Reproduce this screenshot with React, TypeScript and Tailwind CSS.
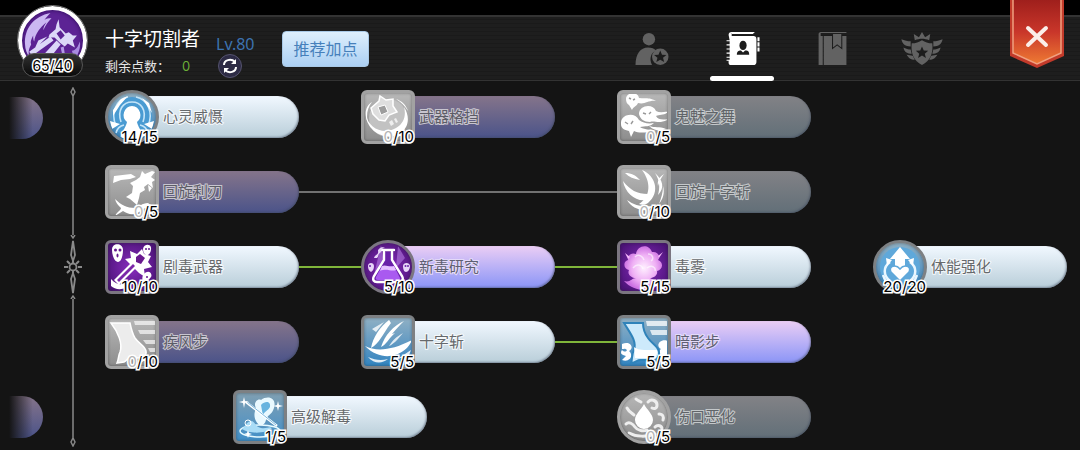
import React, { useState } from "react";
import clsx from "clsx";

type Tone = "light" | "violet" | "dimViolet" | "dimGray";
type Tint = "blue" | "sky" | "purple" | "gray";

type Skill = {
  name: string;
  points: number;
  max: number;
  tone: Tone;
  tint: Tint;
  round?: boolean;
  cell: string;
  link?: "on" | "off";
  art: React.ReactNode;
};

const barTone: Record<Tone, string> = {
  light: "bg-linear-to-b from-[#f1f8ff] to-[#b9ced9] text-[#66696c]",
  violet: "bg-linear-to-b from-[#ebcdf4] to-[#8b94f6] text-[#5f6072]",
  dimViolet: "bg-linear-to-b from-[#85748a] to-[#4b5389] text-[#5c5c66]",
  dimGray: "bg-linear-to-b from-[#828286] to-[#626f78] text-[#606468]",
};

const nameStroke: Record<Tone, string> = {
  light: "[-webkit-text-stroke:2px_#f4f8fb]",
  violet: "[-webkit-text-stroke:2px_#e4daf8]",
  dimViolet: "[-webkit-text-stroke:2px_#c8c5cf]",
  dimGray: "[-webkit-text-stroke:2px_#c4c8ca]",
};

const iconTint: Record<Tint, string> = {
  blue: "border-[#7d8083] bg-linear-to-b from-[#8fb0c4] to-[#2f84c0]",
  sky: "border-[#7d8083] bg-linear-to-b from-[#7f9fb2] to-[#3f8fc8]",
  purple: "border-[#7b7681] bg-radial from-[#8a2cc0] to-[#43106d]",
  gray: "border-[#a2a2a2] bg-linear-to-b from-[#b8b8b8] to-[#8d8d8d]",
};

function Art({ round, children }: { round?: boolean; children: React.ReactNode }) {
  return (
    <svg
      viewBox="0 0 54 54"
      className={clsx(
        "absolute -inset-[3px] size-[54px]",
        round ? "[clip-path:circle(23px)]" : "[clip-path:inset(4px_round_3px)]"
      )}
      fill="#fff"
      aria-hidden="true"
    >
      {children}
    </svg>
  );
}

const mindArt = (
  <>
    <circle cx="27" cy="27" r="20" fill="#4a9bd2" />
    <path d="M27 16a9 9 0 0 1 5 16c1 5 4 7 6 16H16c2-9 5-11 6-16a9 9 0 0 1 5-16z" />
    <g fill="none" stroke="#c4e4f8" strokeWidth="1.600">
      <path d="M16 32C12 20 18 12 27 12s15 8 11 20" />
      <path d="M11 36C5 22 12 9 23 7M43 36c6-14-1-27-12-29" />
      <path d="M19 35c-5 1-7 4-8 8M35 35c5 1 7 4 8 8" />
    </g>
    <path d="M5 31l10 3-8 5zM49 31l-10 3 8 5zM8 20l8-11 7-3-8 9-7 11zM37 8l7 5 3 10-6-9z" />
  </>
);

const guardArt = (
  <>
    <circle cx="27" cy="28" r="19" fill="#c2c2c2" />
    <path d="M10 18l8-7 1-5 6 4 7-1v7l4 6-8 3-4 6-6-1-6-6z" fill="#dedede" stroke="#fff" strokeWidth="1.500" />
    <path d="M17 17l7-2 3 7-7 3z" fill="#9d9d9d" stroke="#fff" />
    <path d="M5 24c2 15 18 21 30 14 9-5 10-14 8-21 7 11 4 22-5 27C25 51 5 42 5 24z" />
    <path d="M11 12c-5 6-6 14-4 21-4-8-3-17 4-21zM35 9c6 2 10 6 12 12-3-5-7-9-12-12z" />
    <path d="M28 32l3-2 2 4-3 2zM33 29l2-1 2 4-2 1z" fill="#eee" />
  </>
);

const ghostsArt = (
  <>
    <path d="M9 9c0-7 12-8 13-1 6 1 10-1 17 3-8-1-11 4-18 2-1 3-5 4-6 7l-3-5c-2-1-3-3-3-6z" />
    <path d="M22 24c0-9 14-11 17-3 4 2 8 1 13 0-5 5-9 3-13 5 2 4 7 4 13 3-10 6-14 1-19 3-6 0-10-3-11-8z" />
    <path d="M4 34c-1-10 14-13 18-4 4 3 9 4 15 3-4 4-9 3-14 4 4 3 10 2 16 4-9 1-16 3-22 0l-3 6-2-6c-5-1-8-3-8-7z" />
    <path d="M32 36c6 2 10 0 17 3-5 2-10 3-17-3z" />
    <g stroke="#999" strokeWidth="1.400">
      <path d="M12 8l2 1M16 10l2-1M26 23l3 1M32 24l2-2M8 32l3 2M14 34l2-3" />
    </g>
  </>
);

const bladeArt = (
  <>
    <path d="M9 11l17-2 5 3-6 2-9 1-8 3z" />
    <path d="M37 6l3 3 7-3 3 1-4 5 4 3-3 2 1 6-5-4-4 3 1 3-5 3-1 5-2 7-7-6-4-2 6-4 1-7-3-3 6-3 4-3z" />
    <path d="M10 34c6 6 12 9 20 9 4-1 7-5 13-5l4 3-9 3c-7 7-14 6-20 2L10 51c2-4 6-6 6-8-3-3-5-5-6-9z" />
    <path d="M43 20l4 3-3 4z" />
  </>
);

const spinCrossArt = (
  <>
    <path d="M25 5c13 5 19 22 6 33-3 2-6 2-9 1C34 31 34 17 25 5z" />
    <path d="M6 16c7 9 14 13 25 13l-2 6C19 37 8 28 6 16zM8 8c7 0 10 2 15 7C17 14 12 12 8 8zM10 35c8 6 16 7 26 6l-5 4c-9 1-17-3-21-10z" />
    <path d="M38 8c5 8 5 15 3 22 7-7 5-15-3-22zM47 9c-5 3-7 7-6 12 1-4 3-8 6-12zM46 21c2 7 0 13-4 18 2-6 4-11 4-18z" />
  </>
);

const poisonBladeArt = (
  <>
    <path d="M7 10c0-8 11-7 11 0 0 6-2 12-5 12S7 16 7 10zM38 9c1-6 9-5 8 0 0 4-3 7-5 6s-3-3-3-6zM39 34c4-5 9-1 7 3-2 3-5 4-8 6-1-4-1-7 1-9z" />
    <g fill="#64188e">
      <circle cx="10.500" cy="10" r="1.500" />
      <circle cx="15" cy="10" r="1.500" />
      <ellipse cx="12.500" cy="15.500" rx="1" ry="2" />
      <circle cx="41" cy="9" r="1" />
      <circle cx="44" cy="9" r="1" />
      <circle cx="42" cy="37" r="1" />
    </g>
    <path d="M9 40l16-16-5-5 6-1-1-7 7 3 5-5 2 5 7 2-3 6 4 5-8 2 1 8-6-4-4-4-16 16z" />
    <path d="M12 40l16-16 2 2-16 16z" fill="#7b26a8" />
    <path d="M31 17l4-3 5 4-4 6-5-2z" fill="#69198f" />
    <path d="M6 39c5 6 12 7 21 4-5 7-16 8-21 3z" />
  </>
);

const flaskArt = (
  <>
    <g fill="#b27be0" opacity=".6">
      <path d="M20 5l5 30H13zM37 6l7 12-9 10z" />
    </g>
    <path d="M20 10h13M23 12v8L13 36c-2 4 0 6 3 6h22c3 0 5-2 3-6L31 20v-8" fill="#6a21a8" stroke="#fff" strokeWidth="2.400" strokeLinecap="round" />
    <path d="M21 26h12l6 12c0 2-1 2-2 2H17c-2 0-3-1-2-3z" fill="#a95af0" />
    <path d="M21 26c4-2 7 2 12 0l2 4c-5 2-9-2-16 1z" fill="#e5bfff" />
    <path d="M13 18c1-4 5-3 4-7 0-2 4-5 7-3-5 0-3 4-5 5s-1 3-3 5zM7 26c0-4 6-4 6 0 0 3-1 5-3 6-2-1-3-3-3-6zM42 26c0-4 7-4 7 0 0 3-2 6-4 6s-3-3-3-6z" fill="#e8d5f8" />
    <circle cx="44.500" cy="26" r="1" fill="#6a21a8" />
    <circle cx="47" cy="26" r="1" fill="#6a21a8" />
    <circle cx="9" cy="26" r="1" fill="#6a21a8" />
  </>
);

const cloudArt = (
  <>
    <defs>
      <radialGradient id="mist">
        <stop offset="0" stopColor="#fff0ff" />
        <stop offset=".6" stopColor="#efb0f5" />
        <stop offset="1" stopColor="#cc70e2" />
      </radialGradient>
    </defs>
    <path d="M7 41c6 2 8-3 12-3-5 0-9-4-7-8-6-1-6-9-1-10-1-4 3-8 8-6 1-9 13-11 16-2 6-1 9 5 6 8 6 2 5 10-1 11 1 4-3 7-7 7 4 2 8 5 14 3-7 6-14 9-20 9s-15-3-20-9z" fill="url(#mist)" />
    <path d="M18 17c4-4 8 0 9 3M31 14c5 0 6 5 3 7M16 28c4-5 9-3 10 1M30 28c5-4 9 0 8 3" fill="none" stroke="#fff" strokeWidth="1.500" opacity=".6" />
    <path d="M8 13l5 4-2 2zM46 12l-4 6-1-2z" fill="#f4b6fa" />
  </>
);

const stepArt = (
  <>
    <g opacity=".65">
      <path d="M29 6h22v4H30zM33 15h18v4H35zM38 25h13v4H41zM43 33h8v4h-6z" />
    </g>
    <path d="M6 8h19c1 5 2 10 5 15 4 6 10 8 11 13 1 5-3 7-8 7h-8c-3 0-3 3-6 4l-7 1c2-5 1-7 3-11 3-8-2-20-9-29z" fill="#ececec" stroke="#fff" strokeWidth="1.500" />
  </>
);

const crossArt = (
  <>
    <path d="M28 5C19 12 12 22 10 33c8-4 11-13 20-25-1-1-1-2-2-3zM43 6C32 11 24 20 20 32c5-2 8-9 14-14l-3 1c4-5 8-9 12-13z" />
    <path d="M42 18c-7 4-10 7-14 13 5-2 8-6 14-13zM11 14l12-7-8 10z" opacity=".8" />
    <path d="M4 31c12 6 28 4 47-6-5 14-28 25-47 6z" />
    <path d="M7 42c7 3 13 4 20 2-6 5-14 5-20-2zM38 43l12-8-3 8z" opacity=".85" />
  </>
);

const shadowStepArt = (
  <>
    <g opacity=".75">
      <path d="M29 6h22v5H30zM33 15h18v5H35z" />
    </g>
    <path d="M5 29c8-4 13 4 7 7 5 4 1 12-7 9l4-4c-5-1-6-3-4-6 2 2 4 2 5 0-2-2-3-1-5-1zM51 26c-8-3-13 5-7 8-3 2-3 9 3 12l4 1z" />
    <path d="M7 8h19c0 6 2 11 5 15 4 6 10 8 11 14 1 6-3 8-8 8H23c-3 0-4 3-9 3 2-5 0-8 3-13 3-9-4-17-10-27z" fill="#cdeafb" stroke="#2f83ba" strokeWidth="2" />
    <path d="M17 32c5 4 14 3 23 3 1 5-2 8-6 8H18z" />
  </>
);

const woundArt = (
  <>
    <path d="M27 14c3 6 9 10 9 16a9 9 0 0 1-18 0c0-6 6-10 9-16z" />
    <g fill="none" stroke="#eee" strokeWidth="3" strokeLinecap="round">
      <path d="M10 18c2 4 5 5 7 7M19 9c2 2 4 2 5 3M31 12c4-4 9-1 9 3s-3 4-5 3" />
      <path d="M9 34c3-3 7 0 9 3s8 5 12 3M12 43c7 4 18 4 26 1M42 24c4 0 5 3 4 6M38 37c3-3 7-1 7 2" />
    </g>
  </>
);

const strengthArt = (
  <>
    <circle cx="27" cy="27" r="20" fill="#5fa8da" />
    <path d="M27 7l10 12h-5v9H22v-9h-5z" />
    <path d="M27 41l-9-9c-3-6 5-8 9-3 4-5 12-3 9 3z" stroke="#5fa8da" strokeWidth="1.500" />
    <g fill="none" stroke="#eaf7ff" strokeWidth="2.500">
      <path d="M17 22c-7 5-7 13 0 19M37 22c7 5 7 13 0 19" />
      <path d="M10 35l3 7 7 1M44 35l-3 7-7 1" />
    </g>
    <path d="M13 18l6 2-5 6zM41 18l-6 2 5 6z" />
  </>
);

const cureArt = (
  <>
    <ellipse cx="27" cy="41" rx="20" ry="6" fill="none" stroke="#e6faff" strokeWidth="1.500" />
    <path d="M9 39c3-2 5-8 9-8s4 6 10 7 8-2 11 0c-6 6-23 6-30 1z" fill="#a9dcf6" />
    <path d="M26 35c-6-6-5-12-3-17-3-4 1-10 5-8 7-5 16-2 13 8-2 7-7 7-8 12-1 4-3 6-7 5z" fill="#e9f9ff" />
    <path d="M28 15c5-5 10-3 9 2-2 4-6 4-7 9z" fill="#68b4df" />
    <path d="M13 12l31 24" stroke="#fff" strokeWidth="2.500" />
    <path d="M14 12l29 23" stroke="#5aa8d8" strokeWidth=".8" />
    <path d="M11 7l1 4 4 1-4 1-1 5-1-5-4-1 4-1zM45 11l1 4 4 1-4 1-1 4-1-4-4-1 4-1zM15 40l1 3 3 1-3 1-1 3-1-3-3-1 3-1z" />
    <circle cx="15" cy="33" r="3" fill="none" stroke="#fff" />
  </>
);

const skills: Skill[] = [
  { name: "心灵威慑", points: 14, max: 15, tone: "light", tint: "blue", round: true, cell: "row-start-1 col-start-1 col-span-2", art: mindArt },
  { name: "武器格挡", points: 0, max: 10, tone: "dimViolet", tint: "gray", cell: "row-start-1 col-start-3 col-span-2", art: guardArt },
  { name: "鬼魅之舞", points: 0, max: 5, tone: "dimGray", tint: "gray", cell: "row-start-1 col-start-5 col-span-2", art: ghostsArt },
  { name: "回旋利刃", points: 0, max: 5, tone: "dimViolet", tint: "gray", cell: "row-start-2 col-start-1 col-span-4", link: "off", art: bladeArt },
  { name: "回旋十字斩", points: 0, max: 10, tone: "dimGray", tint: "gray", cell: "row-start-2 col-start-5 col-span-2", art: spinCrossArt },
  { name: "剧毒武器", points: 10, max: 10, tone: "light", tint: "purple", cell: "row-start-3 col-start-1 col-span-2", link: "on", art: poisonBladeArt },
  { name: "新毒研究", points: 5, max: 10, tone: "violet", tint: "purple", round: true, cell: "row-start-3 col-start-3 col-span-2", link: "on", art: flaskArt },
  { name: "毒雾", points: 5, max: 15, tone: "light", tint: "purple", cell: "row-start-3 col-start-5 col-span-2", art: cloudArt },
  { name: "体能强化", points: 20, max: 20, tone: "light", tint: "blue", round: true, cell: "row-start-3 col-start-7 col-span-2", art: strengthArt },
  { name: "疾风步", points: 0, max: 10, tone: "dimViolet", tint: "gray", cell: "row-start-4 col-start-1 col-span-2", art: stepArt },
  { name: "十字斩", points: 5, max: 5, tone: "light", tint: "blue", cell: "row-start-4 col-start-3 col-span-2", link: "on", art: crossArt },
  { name: "暗影步", points: 5, max: 5, tone: "violet", tint: "blue", cell: "row-start-4 col-start-5 col-span-2", art: shadowStepArt },
  { name: "高级解毒", points: 1, max: 5, tone: "light", tint: "sky", cell: "row-start-5 col-start-2 col-span-2", art: cureArt },
  { name: "伤口恶化", points: 0, max: 5, tone: "dimGray", tint: "gray", round: true, cell: "row-start-5 col-start-5 col-span-2", art: woundArt },
];

function SkillNode({ skill }: { skill: Skill }) {
  return (
    <div className={clsx("flex items-center", skill.cell)}>
      <button type="button" className="flex w-[194px] shrink-0 cursor-pointer items-center text-left">
        <span
          className={clsx(
            "relative z-10 size-[54px] shrink-0 border-3 shadow-[inset_0_0_3px_rgba(40,40,40,0.5)]",
            skill.round ? "rounded-full" : "rounded-md",
            iconTint[skill.tint]
          )}
        >
          <Art round={skill.round}>{skill.art}</Art>
          <span className="absolute -right-[2px] -bottom-[4px] text-[15px] leading-4 text-black [-webkit-text-stroke:3px_#fff] [paint-order:stroke_fill]">
            <span className={clsx(skill.points === 0 && "text-[#b5b5b5]")}>{skill.points}</span>/{skill.max}
          </span>
        </span>
        <span
          className={clsx(
            "-ml-6 flex h-[42px] flex-1 items-center rounded-r-full pl-7 shadow-[inset_-1px_-1px_2px_rgba(60,70,90,0.5)]",
            barTone[skill.tone]
          )}
        >
          <span className={clsx("text-[15px] leading-5 [paint-order:stroke_fill]", nameStroke[skill.tone])}>
            {skill.name}
          </span>
        </span>
      </button>
      {skill.link && (
        <div className={clsx("h-[2px] flex-1", skill.link === "on" ? "bg-[#7fb53a]" : "bg-[#727272]")} />
      )}
    </div>
  );
}

function Divider() {
  return (
    <div className="flex w-6 shrink-0 flex-col items-center">
      <svg className="h-3 w-2" viewBox="0 0 8 12" fill="none" stroke="#888" strokeWidth="1.500" aria-hidden="true">
        <path d="M4 1L6 5 4 9 2 5zM4 9v3" />
      </svg>
      <div className="w-[2px] flex-1 bg-[#6c6c6c]" />
      <svg className="h-16 w-6" viewBox="0 0 24 64" fill="none" stroke="#8a8a8a" aria-hidden="true">
        <path d="M10 0l2 3 2-3M10 64l2-3 2 3" strokeWidth="1.500" />
        <path d="M12 6l2 14-2 6-2-6zM12 58l2-14-2-6-2 6z" strokeWidth="1.800" />
        <circle cx="12" cy="32" r="3.500" strokeWidth="1.800" />
        <path d="M3 32h4M17 32h4M6 26l3 3M18 26l-3 3M6 38l3-3M18 38l-3-3M12 26v2M12 36v2" strokeWidth="2" />
      </svg>
      <div className="w-[2px] flex-1 bg-[#6c6c6c]" />
      <svg className="h-3 w-2" viewBox="0 0 8 12" fill="none" stroke="#888" strokeWidth="1.500" aria-hidden="true">
        <path d="M4 11L6 7 4 3 2 7zM4 3V0" />
      </svg>
    </div>
  );
}

const tabs = [
  {
    id: "job",
    label: "职业",
    icon: (
      <>
        <circle cx="14" cy="7" r="6" />
        <path d="M1 32c0-11 5-17 12-17 4 0 6 1 8 3-5 2-7 8-4 14z" />
        <circle cx="25" cy="24" r="8" />
        <path d="M25 18l1.700 4 4.300.3-3.300 2.700 1.100 4.200-3.800-2.300-3.800 2.300 1.100-4.200-3.300-2.700 4.300-.3z" fill="#1c1c1c" />
      </>
    ),
  },
  {
    id: "skills",
    label: "技能",
    icon: (
      <>
        <path d="M4 3c0-2 1-3 3-3h22v1H7v3h21c2 0 3 1 3 3v22c0 2-1 3-3 3H6c-1 0-2-1-2-2v-2H2v-1h3v-2H2v-1h3v-3H2v-1h3v-3H2v-1h3v-3H2v-1h3v-3H2V8h3z" />
        <path d="M7 1h21v1H7zM32 5h2v4h-2zM32 10h2v4h-2zM32 15h2v4h-2z" />
        <ellipse cx="18" cy="13" rx="3.500" ry="4.500" fill="#1c1c1c" />
        <path d="M12 22c0-4 3-4 4-4l2 2 2-2c2 0 4 0 4 4z" fill="#1c1c1c" />
      </>
    ),
  },
  {
    id: "codex",
    label: "图鉴",
    icon: (
      <>
        <path d="M4 2c0-1 1-2 2-2h25v1H6v3h2v28H4zM9 4h8v13l5-4 5 4V4h4v28H9z" />
        <path d="M18 2h8v13l-4-3-4 3z" />
      </>
    ),
  },
  {
    id: "honor",
    label: "荣誉",
    icon: (
      <g transform="translate(-3 0)">
        <path d="M13 8l-1-6 5 3 3-5 3 5 5-3-1 6c-5-2-9-2-14 0z" />
        <path d="M10 11c4 0 7-1 10-3 3 2 6 3 10 3 1 10-2 17-10 21-8-4-11-11-10-21z" />
        <path d="M0 7c3 1 6 2 9 2v5c-5 0-8-2-9-7zM2 15c2 1 5 2 7 2l1 4c-4 0-7-1-8-6zM5 22l6 1 2 4c-4 0-6-2-8-5zM40 7c-3 1-6 2-9 2v5c5 0 8-2 9-7zM38 15c-2 1-5 2-7 2l-1 4c4 0 7-1 8-6zM35 22l-6 1-2 4c4 0 6-2 8-5z" />
        <path d="M20 14l1.700 4 4.300.3-3.300 2.700 1.100 4.200-3.800-2.300-3.800 2.300 1.100-4.200-3.300-2.700 4.300-.3z" fill="#1c1c1c" />
      </g>
    ),
  },
];

function Header() {
  const [active, setActive] = useState("skills");

  return (
    <header className="flex h-[81px] shrink-0 items-start border-b border-[#333] bg-[linear-gradient(to_bottom,#000_15px,#333_15px,#333_17px,transparent_17px),repeating-linear-gradient(to_bottom,#1e1e1e_0px,#1e1e1e_3px,#1a1a1a_3px,#1a1a1a_4px)] pr-4 pl-[18px]">
      <div className="relative mt-[6px] size-[69px] shrink-0 rounded-full border-4 border-white bg-[#5c2394] shadow-[inset_0_0_4px_#2b0c55] outline-1 outline-[#777]">
        <svg viewBox="0 0 60 60" className="size-full" fill="#dcd8f8" aria-hidden="true">
          <path d="M28 3C12 6 2 18 3 34c0 5 2 9 4 12-1-6 0-8 2-12-1-3 0-5 2-9 0 3 0 4 1 6 1-8 6-14 12-19-2 3-3 5-3 8 2-5 5-9 8-12-3 0-5 0-7 2 2-3 4-5 6-7z" fill="#cbb8f2" />
          <path d="M36 9l1 8 6 6 3-1 4 3 4 0-4 5 2 7-7-4-3 3-5-4-5-5-6 0 1-3 6-5 1-5z" />
          <path d="M34 23l4-3 4 5-4 4z" fill="#5c2394" />
          <path d="M28 26l3 4-21 15-3-4zM34 30l4 4-16 20-7-3zM12 39l4-9 9-4z" />
          <path d="M38 37l3 13 2-1-2-13z" fill="#b49ae6" />
          <path d="M57 31c1 8-3 17-10 22 2-6 4-9 2-13 4 0 6-4 8-9z" fill="#a98be0" />
        </svg>
        <span className="absolute -inset-x-0 -bottom-[6px] flex h-6 items-center justify-center rounded-xl border border-[#555] bg-linear-to-b from-[#333] to-[#0a0a0a] text-[14px] text-black">
          <span className="[-webkit-text-stroke:3px_#fff] [paint-order:stroke_fill]">65/40</span>
        </span>
      </div>

      <div className="mt-7 ml-[18px] flex shrink-0 gap-4">
        <div>
          <h1 className="text-[19px] leading-6 text-white">十字切割者</h1>
          <p className="mt-1 flex items-center gap-3 text-[13px] leading-5 text-[#e6e6e6]">
            剩余点数：<span className="text-[#6cae38]">0</span>
          </p>
        </div>
        <div className="w-[42px]">
          <p className="mt-1 font-['Noto_Sans'] text-[16px] leading-6 text-[#3d73b0]">Lv.80</p>
          <button
            type="button"
            aria-label="重置"
            className="-mt-[2px] ml-[2px] flex size-6 cursor-pointer items-center justify-center rounded-full border border-[#55536e] bg-[#2d2b45]"
          >
            <svg viewBox="0 0 16 16" className="size-4" fill="none" stroke="#fff" strokeWidth="2" aria-hidden="true">
              <path d="M2 7c0-5 7-7 11-3M14 9c0 5-7 7-11 3" />
              <path d="M14 1v5H9zM2 15v-5h5z" fill="#fff" stroke="none" />
            </svg>
          </button>
        </div>
      </div>
      <button
        type="button"
        className="mt-[31px] ml-6 h-9 w-[87px] shrink-0 cursor-pointer rounded-sm border border-[#a9c9e6] bg-linear-to-b from-[#deeffc] to-[#acd0f3] text-[16px] text-[#4680bb]"
      >
        推荐加点
      </button>

      <nav className="mt-4 ml-auto flex gap-[26px]">
        {tabs.map((tab) => (
          <button
            key={tab.id}
            type="button"
            aria-label={tab.label}
            onClick={() => setActive(tab.id)}
            className={clsx(
              "flex h-[65px] w-16 cursor-pointer flex-col items-center justify-between pt-4",
              active === tab.id ? "text-white" : "text-[#626262]"
            )}
          >
            <svg viewBox="0 0 34 33" className="h-[34px] w-9 overflow-visible" fill="currentColor" aria-hidden="true">
              {tab.icon}
            </svg>
            {active === tab.id && <span className="h-[5px] w-full rounded-full bg-white" />}
          </button>
        ))}
      </nav>

      <button type="button" aria-label="关闭" className="ml-14 shrink-0 cursor-pointer">
        <svg viewBox="0 0 54 68" className="h-[68px] w-[54px]" fill="none" aria-hidden="true">
          <defs>
            <linearGradient id="ribbon" x1="0" y1="0" x2="0" y2="1">
              <stop offset="0" stopColor="#9f1f1c" />
              <stop offset=".5" stopColor="#c9362a" />
              <stop offset="1" stopColor="#ee7a33" />
            </linearGradient>
          </defs>
          <path d="M0 0h54v56L27 68 0 56z" fill="#c23a2a" />
          <path d="M3 0v53l24 11 24-11V0" fill="url(#ribbon)" stroke="#f0a080" strokeWidth="1.500" />
          <path d="M18 28l18 17M36 28L18 45" stroke="#fbeee9" strokeWidth="4" strokeLinecap="round" />
        </svg>
      </button>
    </header>
  );
}

export default function App() {
  return (
    <div className="flex min-h-screen flex-col overflow-hidden bg-[#141414] font-[Inter,'Noto_Sans_CJK_SC',sans-serif]">
      <Header />
      <main className="flex flex-1 overflow-hidden">
        <div className="flex w-[43px] shrink-0 flex-col justify-between pt-4 pb-3 pl-[9px]">
          <div className="h-[42px] rounded-r-full bg-[linear-gradient(to_right,#141414,transparent_70%),linear-gradient(to_bottom,#85748a,#4b5389)]" />
          <div className="h-[42px] rounded-r-full bg-[linear-gradient(to_right,#141414,transparent_70%),linear-gradient(to_bottom,#85748a,#4b5389)]" />
        </div>
        <div className="ml-[18px] flex pt-[6px] pb-[3px]">
          <Divider />
        </div>
        <div className="ml-5 grid auto-rows-[54px] grid-cols-[repeat(8,128px)] gap-y-[21px] pt-[9px] pb-[6px]">
          {skills.map((skill) => (
            <SkillNode key={skill.name} skill={skill} />
          ))}
        </div>
      </main>
    </div>
  );
}
